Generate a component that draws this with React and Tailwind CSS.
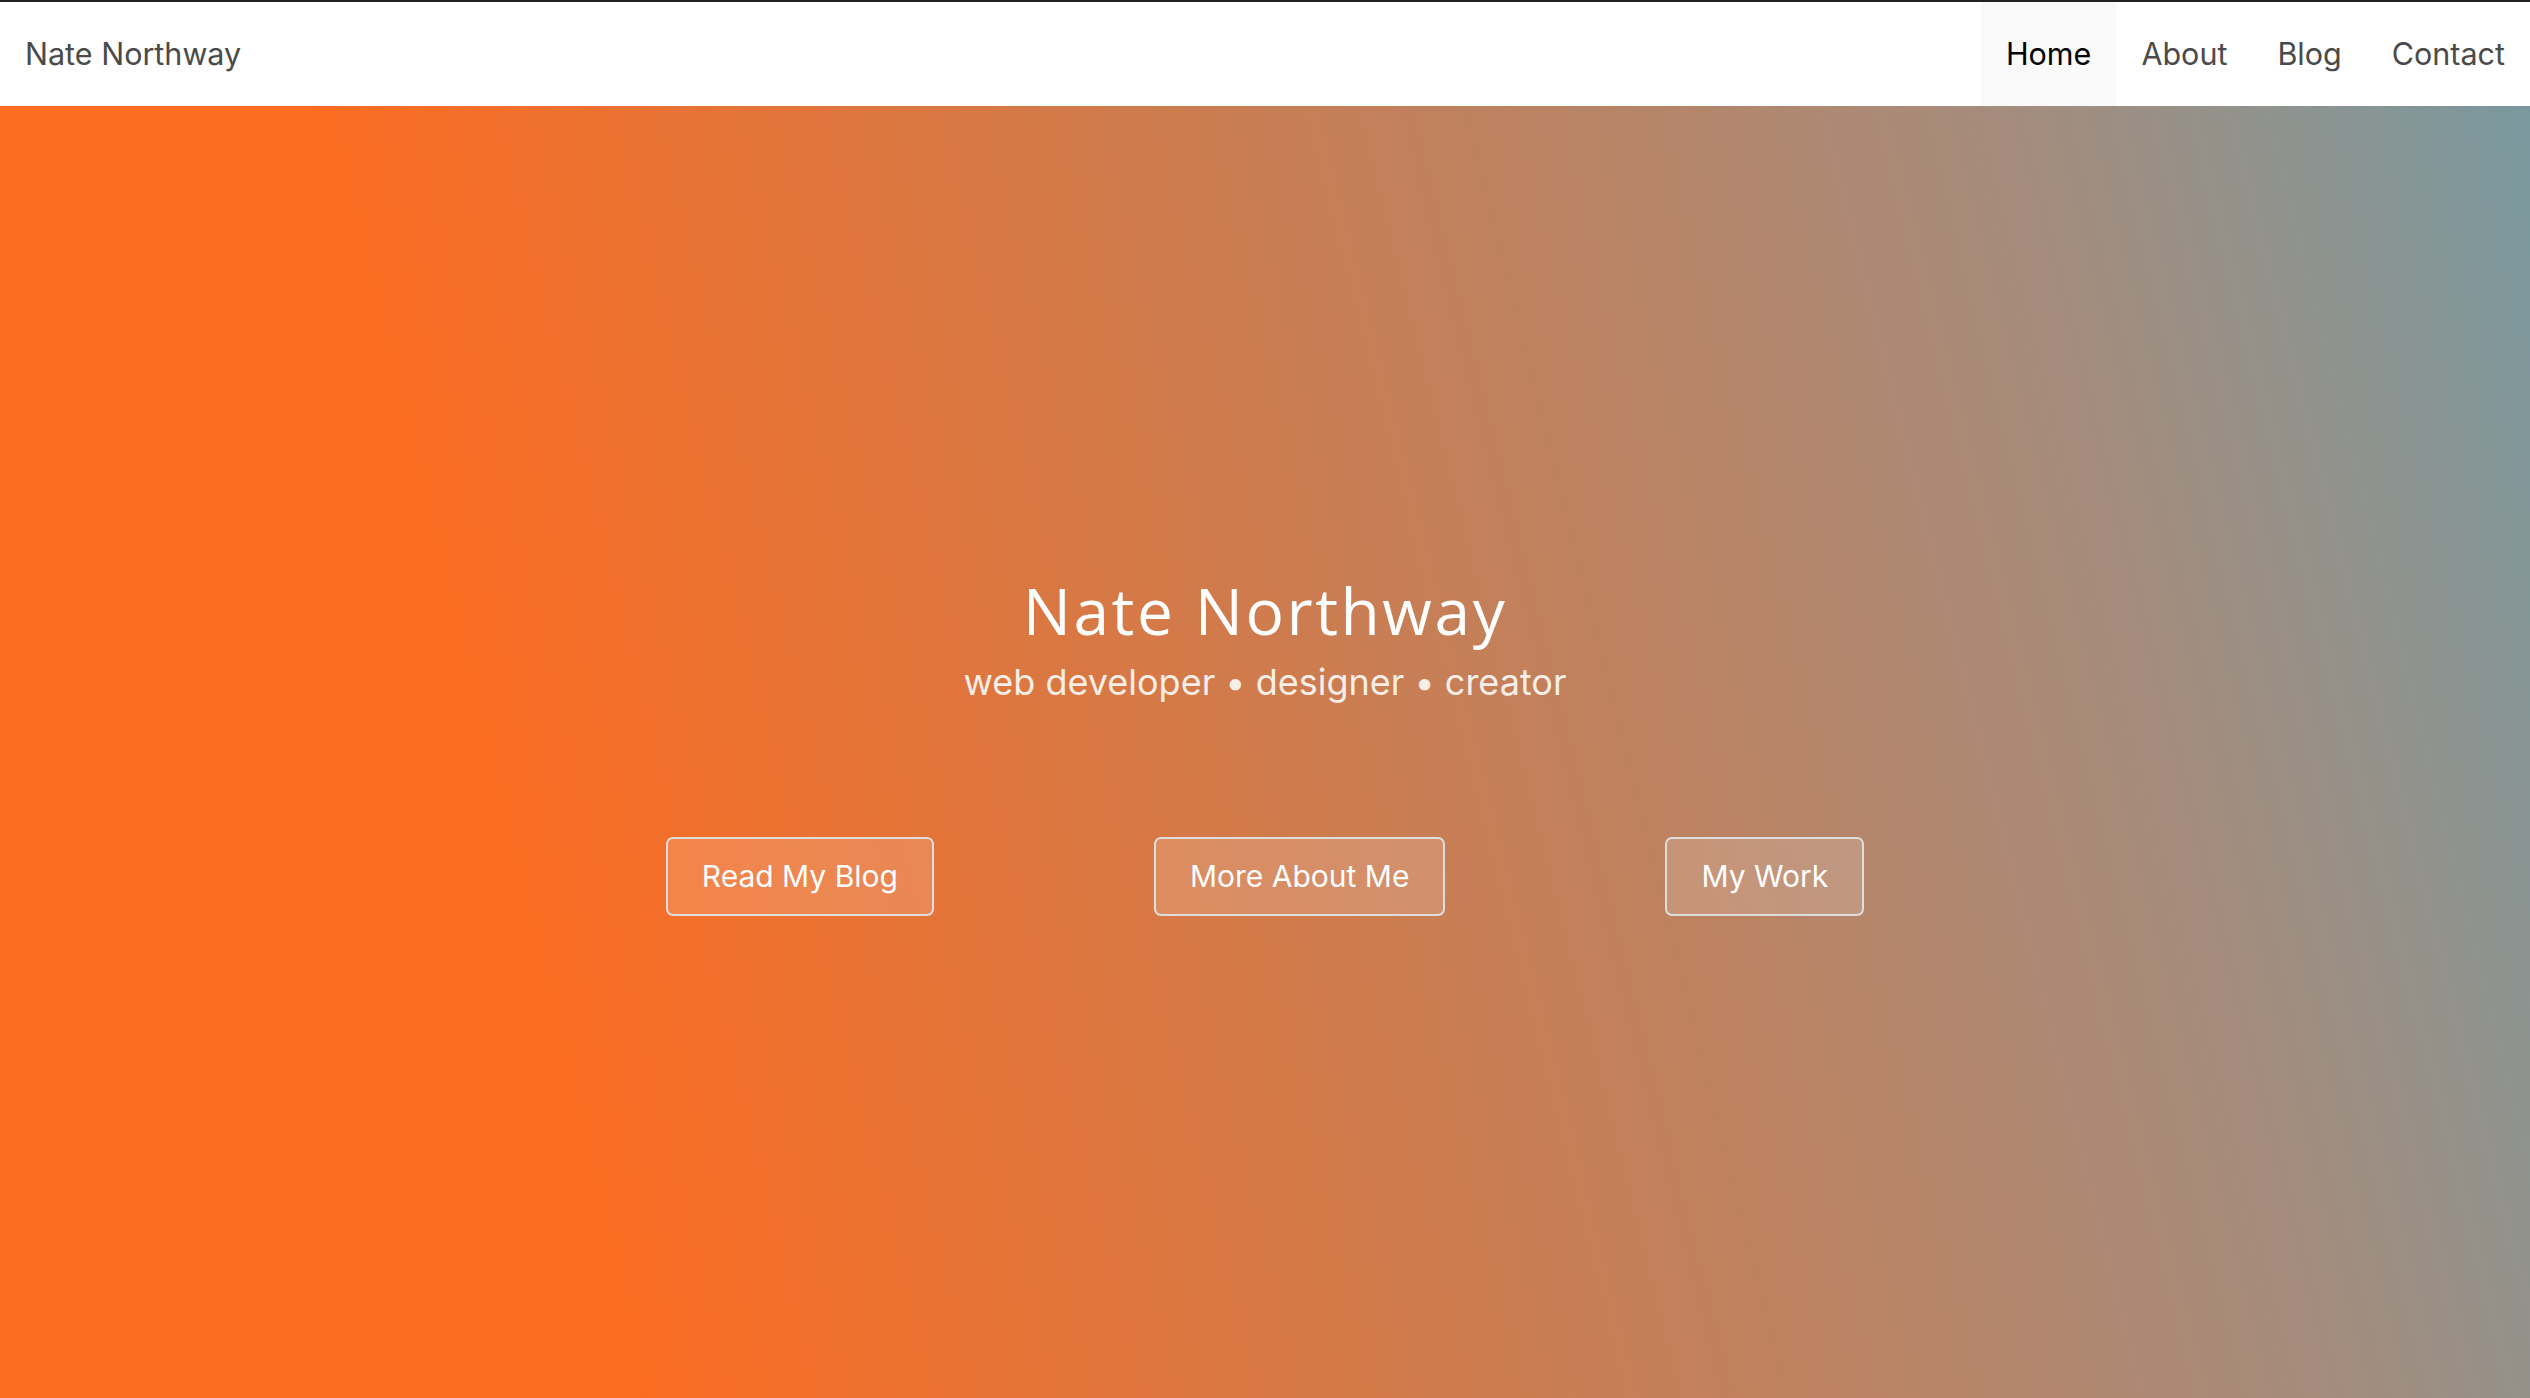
const links = ['Home', 'About', 'Blog', 'Contact'];
const buttons = ['Read My Blog', 'More About Me', 'My Work'];

function NavBar() {
  return (
    <nav className="flex h-[106px] items-stretch justify-between border-t-2 border-[#222] bg-white font-['Inter',sans-serif] text-[30.5px] text-[#4a4a4a]">
      <a href="#" className="flex items-center pl-[25px]">
        Nate Northway
      </a>
      <ul className="flex items-stretch">
        {links.map((link, i) => (
          <li key={link} className={i === 0 ? 'bg-[#f9f9f9] text-black' : ''}>
            <a href="#" className="flex h-full items-center px-[25px]">
              {link}
            </a>
          </li>
        ))}
      </ul>
    </nav>
  );
}

function Hero() {
  return (
    <section className="flex h-[1292px] flex-col items-center justify-center bg-[linear-gradient(76deg,#fc6c21_22%,#d07b4c_50%,#a48c7d_82%,#7a999f_100%)] pb-[12px] text-white">
      <h1 className="font-['Open_Sans',sans-serif] text-[64px] leading-[1.1] tracking-[0.04em]">
        Nate Northway
      </h1>
      <p className="mt-[14px] font-['Inter',sans-serif] text-[36px] leading-[1.2] text-[#f8eee8]">
        web developer • designer • creator
      </p>
      <div className="mt-[133px] flex gap-[220px]">
        {buttons.map((label) => (
          <a
            key={label}
            href="#"
            className="flex h-[79px] items-center rounded-[7px] border-2 border-[#dedede] bg-white/15 px-[34px] font-['Inter',sans-serif] text-[30px] text-white"
          >
            {label}
          </a>
        ))}
      </div>
    </section>
  );
}

export default function App() {
  return (
    <div className="min-h-screen bg-white">
      <NavBar />
      <Hero />
    </div>
  );
}
